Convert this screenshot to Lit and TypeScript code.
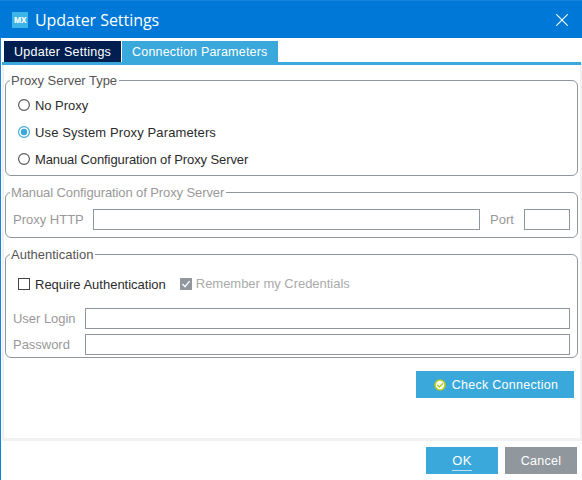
import { LitElement, html, css, svg } from "lit";
import { customElement, property } from "lit/decorators.js";

@customElement("group-box")
class GroupBox extends LitElement {
  @property() label = "";
  static styles = css`
    :host { display: block; position: relative; box-sizing: border-box; border: 1px solid #8f969c; border-radius: 6px; }
    .legend { position: absolute; left: 4px; top: -9px; height: 17px; line-height: 17px; padding: 0 2px 0 1px; background: #fff; white-space: nowrap; }
  `;
  render() {
    return html`<span class="legend">${this.label}</span><slot></slot>`;
  }
}

@customElement("app-root")
class AppRoot extends LitElement {
  static styles = css`
    :host { display: block; width: 582px; height: 480px; overflow: hidden; background: #fff; font: 13px "Liberation Sans", Arial, sans-serif; color: #333; white-space: nowrap; }
    * { box-sizing: border-box; }
    svg { display: block; flex: none; }
    .window { display: flex; flex-direction: column; height: 480px; border-left: 1px solid #1883db; }
    .title { display: flex; align-items: center; height: 38px; flex: none; margin-left: -1px; padding: 0 14px 0 12px; background: #0078d7; border-top: 1px solid #1883db; color: #fff; font: 16px "Open Sans", sans-serif; }
    .title span { flex: 1; margin-left: 7px; line-height: 20px; letter-spacing: -0.04px; }
    .tabs { display: flex; gap: 1px; height: 24px; flex: none; padding: 3px 0 0 3px; color: #fff; font-size: 12.5px; }
    .tab { background: #3aa8db; line-height: 22px; height: 21px; width: 156px; padding-left: 10px; letter-spacing: 0.2px; }
    .tab.dark { background: #001f50; width: 117px; letter-spacing: 0.25px; }
    .body { height: 379px; flex: none; margin-left: 1px; padding: 0 0 0 1px; border-right: 2px solid #f1f1f1; border-left: 2px solid #eef0f6; border-bottom: 3px solid #f0f1f2; }
    .bar { height: 3px; margin: 0 -1px 15px -3px; background: #3aa8db; }
    group-box { width: 573px; color: #555; }
    .type { height: 96px; padding: 15px 0 0 12px; letter-spacing: -0.04px; }
    .radio, .check { display: flex; align-items: center; gap: 5px; height: 19px; }
    .radio { margin-bottom: 8px; }
    .radio svg { margin-bottom: 1px; }
    .dark-text { color: #2b2b2b; }
    .muted { color: #999; }
    .manual { height: 46px; margin-top: 16px; letter-spacing: -0.1px; }
    .auth { height: 104px; margin-top: 16px; }
    .row { display: flex; align-items: center; height: 21px; padding: 0 7px; }
    .field { height: 21px; border: 1px solid #8f969c; background: #fff; }
    .manual .row { margin-top: 16px; letter-spacing: 0; }
    .http { width: 80px; }
    .url { width: 387px; }
    .port { width: 44px; padding-left: 10px; }
    .num { width: 46px; }
    .checks { display: flex; gap: 14px; padding: 20px 0 0 12px; height: 53px; }
    .check { height: 18px; }
    .remember { gap: 4px; color: #aaa; letter-spacing: -0.03px; }
    .remember span { margin-top: -2px; }
    .lab { width: 72px; letter-spacing: -0.03px; }
    .wide { flex: 1; }
    .auth .row + .row { margin-top: 5px; }
    .btn { display: flex; align-items: center; justify-content: center; height: 27px; background: #3aa8db; color: #fff; font-size: 12.5px; letter-spacing: 0.28px; }
    .test { width: 158px; margin: 13px 0 0 411px; padding-left: 2px; gap: 6px; }
    .foot { display: flex; justify-content: flex-end; gap: 7px; padding: 6px 5px 0 0; }
    .foot .btn { width: 72px; }
    .foot .gray { background: #90979d; }
    .ok { height: 18px; line-height: 15px; margin-top: 2px; border-bottom: 1px solid #b9e1f3; font-size: 13px; letter-spacing: 0.3px; }
    .sp-use { letter-spacing: 0.12px; }
    .sp-man { letter-spacing: -0.1px; }
    .sp-req { letter-spacing: 0; }
    .logo { font: bold 9px "Open Sans", sans-serif; fill: #fff; stroke: #fff; stroke-width: 0.2px; }
  `;
  radio(text: string, on: boolean, cls = "") {
    const c = on ? "#3aa8db" : "#555";
    return html`<div class="radio dark-text">
      <svg width="12" height="12" viewBox="0 0 12 12"><circle cx="6" cy="6" r="5.4" fill="#fff" stroke=${c} stroke-width="1.15"/>${on
        ? svg`<circle cx="6" cy="6" r="3.2" fill="#3aa8db"/>` : ""}</svg><span class=${cls}>${text}</span></div>`;
  }
  render() {
    return html`<div class="window">
      <div class="title">
        <svg width="16" height="16"><rect width="16" height="16" fill="#3db5e6"/><text class="logo" x="2" y="11" textLength="12.3" lengthAdjust="spacingAndGlyphs">MX</text></svg>
        <span>Updater Settings</span>
        <svg width="12" height="12" viewBox="0 0 12 12"><path d="M.3.3L11.7 11.7M11.7.3L.3 11.7" stroke="#fff" stroke-width="1.1"/></svg>
      </div>
      <div class="tabs"><div class="tab dark">Updater Settings</div><div class="tab">Connection Parameters</div></div>
      <div class="body">
        <div class="bar"></div>
        <group-box class="type" label="Proxy Server Type">${this.radio("No Proxy", false)}${this.radio("Use System Proxy Parameters", true, "sp-use")}${this.radio("Manual Configuration of Proxy Server", false, "sp-man")}</group-box>
        <group-box class="manual muted" label="Manual Configuration of Proxy Server"><div class="row"><span class="http">Proxy HTTP</span><div class="field url"></div><span class="port">Port</span><div class="field num"></div></div></group-box>
        <group-box class="auth" label="Authentication"><div class="checks">
            <div class="check dark-text"><svg width="12" height="12"><rect x=".5" y=".5" width="11" height="11" fill="#fff" stroke="#444"/></svg><span class="sp-req">Require Authentication</span></div>
            <div class="check remember"><svg width="12" height="12"><rect width="12" height="12" fill="#90979d"/><path d="M2.5 6L5 8.7L9.6 3.2" fill="none" stroke="#fff" stroke-width="1.3"/></svg><span>Remember my Credentials</span></div>
          </div><div class="row muted"><span class="lab">User Login</span><div class="field wide"></div></div><div class="row muted"><span class="lab">Password</span><div class="field wide"></div></div></group-box>
        <div class="btn test"><svg width="12" height="12"><circle cx="6" cy="6" r="5" fill="#fff" stroke="#b8cc1c" stroke-width="1.6"/><path d="M3.2 5.8L5.4 8L9 4.3" fill="none" stroke="#b8cc1c" stroke-width="1.5"/></svg><span>Check Connection</span></div>
      </div>
      <div class="foot"><div class="btn"><span class="ok">OK</span></div><div class="btn gray">Cancel</div></div>
    </div>`;
  }
}
